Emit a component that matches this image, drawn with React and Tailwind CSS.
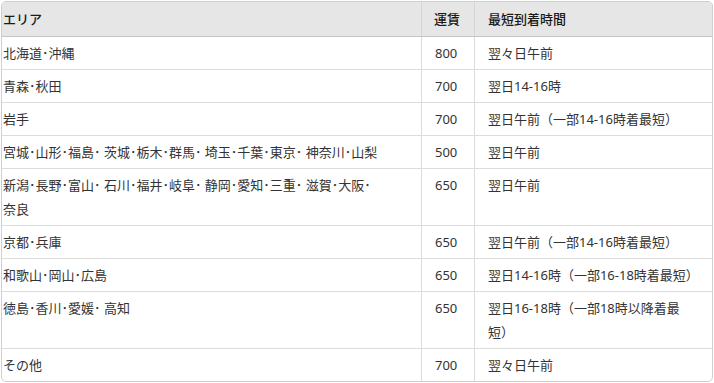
export default function App() {
  const rows = [
    ["北海道･沖縄", "800", "翌々日午前"],
    ["青森･秋田", "700", "翌日14-16時"],
    ["岩手", "700", "翌日午前（一部14-16時着最短）"],
    ["宮城･山形･福島･ 茨城･栃木･群馬･ 埼玉･千葉･東京･ 神奈川･山梨", "500", "翌日午前"],
    [<>新潟･長野･富山･ 石川･福井･岐阜･ 静岡･愛知･三重･ 滋賀･大阪･<br />奈良</>, "650", "翌日午前"],
    ["京都･兵庫", "650", "翌日午前（一部14-16時着最短）"],
    ["和歌山･岡山･広島", "650", "翌日14-16時（一部16-18時着最短）"],
    ["徳島･香川･愛媛･ 高知", "650", <>翌日16-18時（一部18時以降着最<br />短）</>],
    ["その他", "700", "翌々日午前"],
  ];
  return (
    <div className="bg-white w-[714px] h-[383px] pt-[1px] pl-[1px]" style={{ fontFamily: '"Noto Sans", "Noto Sans CJK JP", sans-serif' }}>
      <div className="w-[712px] border border-[#cfcfcf] rounded-[5px] overflow-hidden text-[13px] leading-6 text-[#333]">
        <div className="grid grid-cols-[419px_53px_1fr] bg-[#e6e6e6] border-b border-[#c6c6c6] text-[#1a1a1a] font-medium">
          <div className="py-[5px] pl-[1px]">エリア</div>
          <div className="py-[5px] pl-[12px] border-l border-[#d4d4d4]">運賃</div>
          <div className="py-[5px] pl-[13px] border-l border-[#d4d4d4]">最短到着時間</div>
        </div>
        {rows.map((r, i) => (
          <div key={i} className={"grid grid-cols-[419px_53px_1fr]" + (i < rows.length - 1 ? " border-b border-[#dcdcdc]" : "")}>
            <div className="py-1 pl-[1px] pr-2">{r[0]}</div>
            <div className="py-1 pl-[13px] border-l border-[#dcdcdc]">{r[1]}</div>
            <div className="py-1 pl-[13px] pr-1 border-l border-[#dcdcdc]">{r[2]}</div>
          </div>
        ))}
      </div>
    </div>
  );
}
